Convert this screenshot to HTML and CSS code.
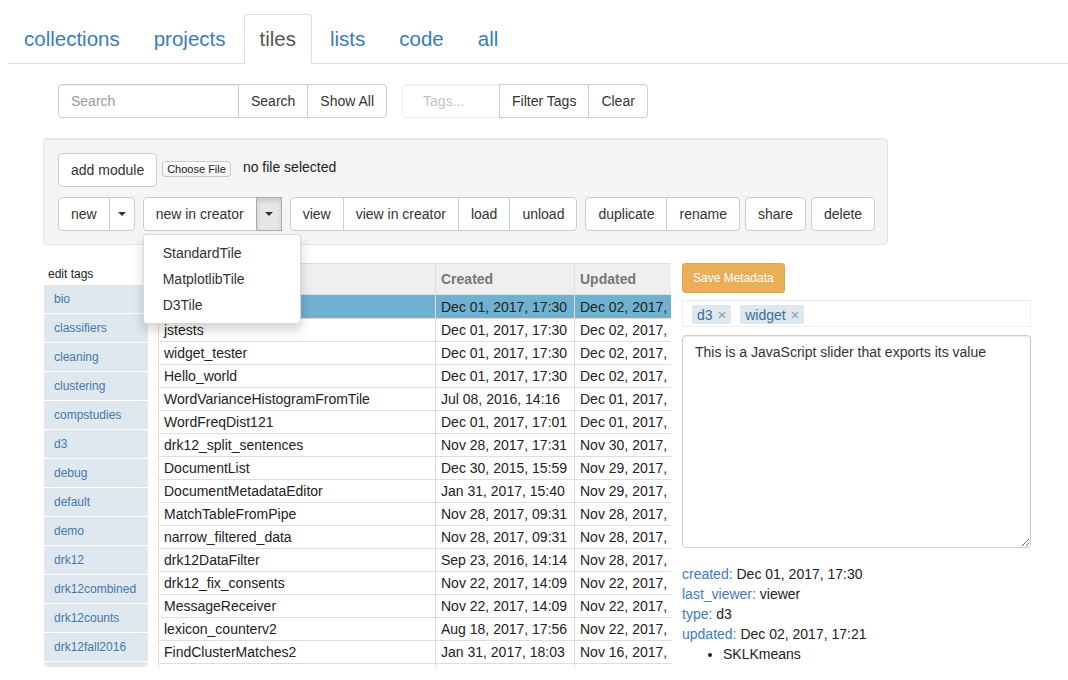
FILE: index.html
```html
<!DOCTYPE html>
<html>
<head>
<meta charset="utf-8">
<link rel="stylesheet" href="styles.css">
</head>
<body>
<div class="page">
  <ul class="nav-tabs">
    <li><a href="#">collections</a></li>
    <li><a href="#">projects</a></li>
    <li class="active"><a href="#">tiles</a></li>
    <li><a href="#">lists</a></li>
    <li><a href="#">code</a></li>
    <li><a href="#">all</a></li>
  </ul>

  <div class="search-row">
    <div class="btn-group">
      <input class="search-input" type="text" placeholder="Search">
      <button class="btn">Search</button>
      <button class="btn">Show All</button>
    </div>
    <div class="btn-group">
      <div class="tags-input">Tags...</div>
      <button class="btn">Filter Tags</button>
      <button class="btn">Clear</button>
    </div>
  </div>

  <div class="well">
    <div class="well-row first">
      <button class="btn">add module</button>
      <div class="file-input">
        <span class="file-btn">Choose File</span>
        <span class="file-text">no file selected</span>
      </div>
    </div>
    <div class="well-row toolbar">
      <div class="btn-group">
        <button class="btn">new</button>
        <button class="btn btn-caret"><span class="caret"></span></button>
      </div>
      <div class="btn-group dropdown">
        <button class="btn">new in creator</button>
        <button class="btn btn-caret pressed"><span class="caret"></span></button>
        <ul class="dropdown-menu">
          <li>StandardTile</li>
          <li>MatplotlibTile</li>
          <li>D3Tile</li>
        </ul>
      </div>
      <div class="btn-group">
        <button class="btn">view</button>
        <button class="btn">view in creator</button>
        <button class="btn">load</button>
        <button class="btn">unload</button>
      </div>
      <div class="tail-groups">
        <div class="btn-group">
          <button class="btn">duplicate</button>
          <button class="btn">rename</button>
        </div>
        <div class="btn-group">
          <button class="btn">share</button>
        </div>
        <div class="btn-group">
          <button class="btn">delete</button>
        </div>
      </div>
    </div>
  </div>

  <div class="main">
    <div class="tag-col">
      <div class="tag-label">edit tags</div>
      <ul class="tag-list">
        <li>bio</li>
        <li>classifiers</li>
        <li>cleaning</li>
        <li>clustering</li>
        <li>compstudies</li>
        <li>d3</li>
        <li>debug</li>
        <li>default</li>
        <li>demo</li>
        <li>drk12</li>
        <li>drk12combined</li>
        <li>drk12counts</li>
        <li>drk12fall2016</li>
        <li class="hidden-tail"></li>
      </ul>
    </div>

    <div class="table-wrap">
      <table class="res-table">
        <colgroup>
          <col class="c-name"><col class="c-date"><col class="c-date"><col class="c-tags">
        </colgroup>
        <thead>
          <tr><th>Name</th><th>Created</th><th>Updated</th><th>Tags</th></tr>
        </thead>
        <tbody>
          <tr class="selected"><td>JSSlider</td><td>Dec 01, 2017, 17:30</td><td>Dec 02, 2017, 17:21</td><td>d3 widget</td></tr>
          <tr><td>jstests</td><td>Dec 01, 2017, 17:30</td><td>Dec 02, 2017, 15:10</td><td>debug</td></tr>
          <tr><td>widget_tester</td><td>Dec 01, 2017, 17:30</td><td>Dec 02, 2017, 15:09</td><td>widget</td></tr>
          <tr><td>Hello_world</td><td>Dec 01, 2017, 17:30</td><td>Dec 02, 2017, 14:55</td><td>demo</td></tr>
          <tr><td>WordVarianceHistogramFromTile</td><td>Jul 08, 2016, 14:16</td><td>Dec 01, 2017, 20:12</td><td>d3</td></tr>
          <tr><td>WordFreqDist121</td><td>Dec 01, 2017, 17:01</td><td>Dec 01, 2017, 17:01</td><td>drk12</td></tr>
          <tr><td>drk12_split_sentences</td><td>Nov 28, 2017, 17:31</td><td>Nov 30, 2017, 16:40</td><td>drk12</td></tr>
          <tr><td>DocumentList</td><td>Dec 30, 2015, 15:59</td><td>Nov 29, 2017, 09:12</td><td>default</td></tr>
          <tr><td>DocumentMetadataEditor</td><td>Jan 31, 2017, 15:40</td><td>Nov 29, 2017, 09:05</td><td>default</td></tr>
          <tr><td>MatchTableFromPipe</td><td>Nov 28, 2017, 09:31</td><td>Nov 28, 2017, 17:44</td><td>drk12</td></tr>
          <tr><td>narrow_filtered_data</td><td>Nov 28, 2017, 09:31</td><td>Nov 28, 2017, 17:40</td><td>drk12</td></tr>
          <tr><td>drk12DataFilter</td><td>Sep 23, 2016, 14:14</td><td>Nov 28, 2017, 11:02</td><td>drk12</td></tr>
          <tr><td>drk12_fix_consents</td><td>Nov 22, 2017, 14:09</td><td>Nov 22, 2017, 14:30</td><td>drk12</td></tr>
          <tr><td>MessageReceiver</td><td>Nov 22, 2017, 14:09</td><td>Nov 22, 2017, 14:21</td><td>widget</td></tr>
          <tr><td>lexicon_counterv2</td><td>Aug 18, 2017, 17:56</td><td>Nov 22, 2017, 10:02</td><td>cleaning</td></tr>
          <tr><td>FindClusterMatches2</td><td>Jan 31, 2017, 18:03</td><td>Nov 16, 2017, 16:47</td><td>clustering</td></tr>
          <tr class="empty-row"><td></td><td></td><td></td><td></td></tr>
        </tbody>
      </table>
    </div>

    <div class="meta-col">
      <button class="btn-save">Save Metadata</button>
      <div class="tag-box">
        <span class="chip">d3 <span class="x">×</span></span>
        <span class="chip">widget <span class="x">×</span></span>
      </div>
      <textarea class="notes">This is a JavaScript slider that exports its value</textarea>
      <div class="meta">
        <div><span class="k">created:</span> Dec 01, 2017, 17:30</div>
        <div><span class="k">last_viewer:</span> viewer</div>
        <div><span class="k">type:</span> d3</div>
        <div><span class="k">updated:</span> Dec 02, 2017, 17:21</div>
        <ul class="meta-list"><li>SKLKmeans</li></ul>
      </div>
    </div>
  </div>
</div>
</body>
</html>
```

FILE: styles.css
```css
* { box-sizing: border-box; }

html, body {
  margin: 0;
  padding: 0;
  background: #fff;
}

body {
  font-family: "Liberation Sans", Arial, Helvetica, sans-serif;
  font-size: 14px;
  line-height: 20px;
  color: #333;
  overflow: hidden;
}

.page {
  padding: 14px 0 0 8px;
}

/* tabs */
.nav-tabs {
  display: flex;
  list-style: none;
  margin: 0;
  padding: 0;
  border-bottom: 1px solid #ddd;
}
.nav-tabs li {
  margin-bottom: -1px;
}
.nav-tabs a {
  display: block;
  padding: 10px 15px;
  margin-right: 2px;
  border: 1px solid transparent;
  border-radius: 4px 4px 0 0;
  font-size: 20.5px;
  line-height: 28px;
  color: #3a7bbf;
  text-decoration: none;
}
.nav-tabs .active a {
  color: #555;
  background: #fff;
  border-color: #ddd #ddd transparent;
}

/* buttons */
.btn {
  display: block;
  font-family: inherit;
  font-size: 14px;
  line-height: 20px;
  padding: 6px 12px;
  color: #333;
  background: #fff;
  border: 1px solid #ccc;
  border-radius: 4px;
  white-space: nowrap;
  margin: 0;
}
.btn-group {
  display: flex;
  position: relative;
}
.btn-group > *:not(:first-child) {
  margin-left: -1px;
  border-top-left-radius: 0;
  border-bottom-left-radius: 0;
}
.btn-group > *:not(:last-child) {
  border-top-right-radius: 0;
  border-bottom-right-radius: 0;
}
.btn-group > .dropdown-menu {
  margin-left: 0;
  border-radius: 4px;
}
.btn-caret {
  padding: 6px 8px;
  display: flex;
  align-items: center;
}
.caret {
  display: block;
  width: 0;
  height: 0;
  border-top: 4px solid #333;
  border-left: 4px solid transparent;
  border-right: 4px solid transparent;
}
.pressed {
  background: #e6e6e6;
  border-color: #adadad;
  box-shadow: inset 0 3px 5px rgba(0, 0, 0, 0.125);
}

/* search row */
.search-row {
  display: flex;
  gap: 15px;
  margin: 20px 0 0 50px;
}
.search-input {
  width: 181px;
  height: 34px;
  padding: 6px 12px;
  font-family: inherit;
  font-size: 14px;
  color: #555;
  border: 1px solid #ccc;
  border-radius: 4px;
  box-shadow: inset 0 1px 1px rgba(0, 0, 0, 0.075);
  outline: none;
}
.search-input::placeholder {
  color: #999;
}
.tags-input {
  width: 98px;
  height: 34px;
  padding: 6px 0 6px 20px;
  color: #c4c4c4;
  border: 1px solid #efefef;
  border-radius: 4px;
  box-shadow: inset 0 1px 1px rgba(0, 0, 0, 0.04);
}

/* well panel */
.well {
  width: 845px;
  margin: 20px 0 0 35px;
  padding: 14px 14px 13px;
  background: #f5f5f5;
  border: 1px solid #e3e3e3;
  border-radius: 4px;
  box-shadow: inset 0 1px 1px rgba(0, 0, 0, 0.05);
}
.well-row {
  display: flex;
  align-items: flex-start;
}
.well-row.first {
  margin-bottom: 10px;
}
.file-input {
  display: flex;
  align-items: center;
  margin: 4px 0 0 5px;
}
.file-btn {
  display: block;
  font-size: 11px;
  line-height: 14px;
  padding: 0 4px;
  color: #222;
  background: linear-gradient(#fff, #f3f3f3);
  border: 1px solid #c9c9c9;
  border-radius: 3px;
  margin-top: 3px;
}
.file-text {
  margin-left: 12px;
  color: #222;
}
.toolbar {
  gap: 8px;
}
.tail-groups {
  display: flex;
  gap: 5px;
}

.dropdown-menu {
  position: absolute;
  top: 100%;
  left: 0;
  z-index: 10;
  width: 158px;
  margin: 3px 0 0;
  padding: 5px 0;
  list-style: none;
  background: #fff;
  border: 1px solid rgba(0, 0, 0, 0.15);
  box-shadow: 0 6px 12px rgba(0, 0, 0, 0.175);
}
.dropdown-menu li {
  padding: 3px 19px;
  line-height: 20px;
  color: #333;
  white-space: nowrap;
}

/* main area */
.main {
  display: flex;
  align-items: flex-start;
  margin-top: 18px;
}

.tag-col {
  width: 104px;
  margin-left: 36px;
}
.tag-label {
  font-size: 12px;
  line-height: 16px;
  padding: 3px 4px 3px;
  color: #222;
}
.tag-list {
  list-style: none;
  margin: 0;
  padding: 0;
  height: 382px;
  overflow: hidden;
  border-radius: 0 0 4px 4px;
}
.tag-list li {
  height: 28px;
  line-height: 28px;
  margin-bottom: 1px;
  padding: 0 10px;
  font-size: 12px;
  color: #4478ad;
  background: #dfe7ef;
}

.table-wrap {
  width: 513px;
  height: 404px;
  margin-left: 10px;
  overflow: hidden;
}
.res-table {
  border-collapse: collapse;
  table-layout: fixed;
  width: 700px;
}
.c-name { width: 277px; }
.c-date { width: 139px; }
.c-tags { width: 145px; }
.res-table th,
.res-table td {
  border: 1px solid #ddd;
  text-align: left;
  white-space: nowrap;
  overflow: hidden;
}
.res-table th {
  padding: 5px 5px;
  font-weight: bold;
  color: #777;
  background: #efefef;
  line-height: 20px;
}
.res-table td {
  padding: 1px 5px;
  line-height: 20px;
  color: #222;
}
.res-table tbody tr.selected td {
  padding-top: 2px;
  background: #70b0d0;
  color: #222;
}
.res-table tbody tr.empty-row td {
  height: 23px;
}

/* metadata column */
.meta-col {
  width: 349px;
  margin-left: 11px;
}
.btn-save {
  display: block;
  font-family: inherit;
  font-size: 12px;
  line-height: 18px;
  padding: 5px 10px;
  color: #fff;
  background: #ebae58;
  border: 1px solid #e5a44a;
  border-radius: 3px;
}
.tag-box {
  display: flex;
  gap: 9px;
  height: 27px;
  margin-top: 7px;
  padding: 4px 9px;
  border: 1px solid #eee;
}
.chip {
  display: block;
  height: 19px;
  line-height: 19px;
  padding: 0 5px;
  font-size: 14px;
  color: #3d6b99;
  background: #dfe7ef;
  border-radius: 2px;
}
.chip .x {
  color: #8e9aa6;
  margin-left: 1px;
  font-size: 15px;
}
.notes {
  display: block;
  width: 349px;
  height: 213px;
  margin-top: 8px;
  padding: 6px 12px;
  font-family: inherit;
  font-size: 14px;
  line-height: 20px;
  color: #333;
  border: 1px solid #ccc;
  border-radius: 4px;
  box-shadow: inset 0 1px 1px rgba(0, 0, 0, 0.075);
  resize: vertical;
  outline: none;
}
.meta {
  margin-top: 16px;
  color: #222;
}
.meta .k {
  color: #3f7bbb;
}
.meta-list {
  margin: 0;
  padding-left: 41px;
}
```
